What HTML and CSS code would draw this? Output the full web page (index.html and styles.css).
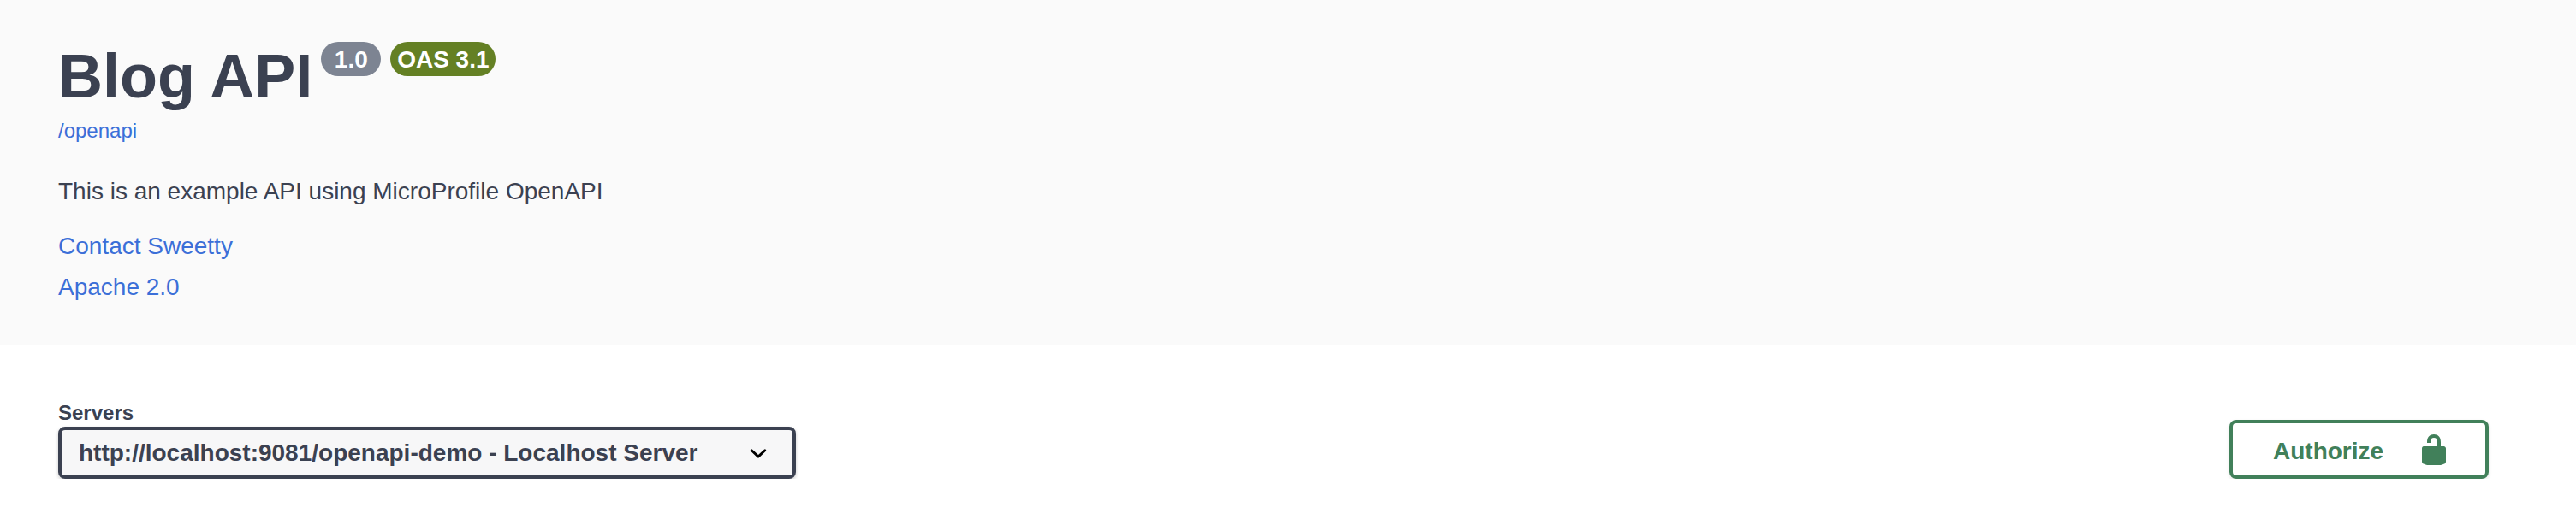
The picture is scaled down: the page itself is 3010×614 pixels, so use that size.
FILE: index.html
```html
<!DOCTYPE html>
<html lang="en">
<head>
  <meta charset="UTF-8">
  <title>Blog API</title>
  <link rel="stylesheet" href="styles.css">
</head>
<body>
  <section class="info">
    <div class="title-row">
      <h1>Blog API</h1>
      <span class="badge badge-version">1.0</span>
      <span class="badge badge-oas">OAS 3.1</span>
    </div>
    <a class="spec-link" href="#">/openapi</a>
    <p class="description">This is an example API using MicroProfile OpenAPI</p>
    <div class="info-link"><a href="#">Contact Sweetty</a></div>
    <div class="info-link"><a href="#">Apache 2.0</a></div>
  </section>

  <section class="scheme">
    <div class="servers">
      <label for="servers">Servers</label>
      <select id="servers">
        <option>http://localhost:9081/openapi-demo - Localhost Server</option>
      </select>
    </div>
    <button class="authorize">
      <span>Authorize</span>
      <svg width="40" height="40" viewBox="0 0 20 20" aria-hidden="true">
        <path d="M15.8 8H14V5.6C14 2.703 12.665 1 10 1 7.334 1 6 2.703 6 5.6V6h2v-.801C8 3.754 8.797 3 10 3c1.203 0 2 .754 2 2.199V8H4c-.553 0-1 .646-1 1.199V17c0 .549.428 1.139.951 1.307l1.197.387C5.672 18.861 6.55 19 7.1 19h5.8c.549 0 1.428-.139 1.951-.307l1.196-.387c.524-.167.953-.757.953-1.306V9.199C17 8.646 16.352 8 15.8 8z"/>
      </svg>
    </button>
  </section>
</body>
</html>
```

FILE: styles.css
```css
body {
  margin: 0;
  background-color: #fff;
  color: #3b4151;
  font-family: "Liberation Sans", Arial, sans-serif;
}

a {
  color: #3b6fd8;
  text-decoration: none;
}

.info {
  height: 403px;
  box-sizing: border-box;
  padding: 48px 102px 0 68px;
  background-color: #fafafa;
}

.title-row {
  display: flex;
  align-items: flex-start;
  height: 87px;
}

h1 {
  margin: 0 10px 0 0;
  font-size: 72px;
  line-height: 82px;
  font-weight: bold;
}

.badge {
  box-sizing: border-box;
  height: 40px;
  margin-top: 1px;
  margin-right: 11px;
  border-radius: 20px;
  color: #fff;
  font-size: 28px;
  font-weight: bold;
  line-height: 41px;
  text-align: center;
  white-space: nowrap;
}

.badge-version {
  width: 70px;
  background-color: #7d8492;
}

.badge-oas {
  width: 123px;
  background-color: #648024;
}

.spec-link {
  display: block;
  font-size: 24px;
  line-height: 36px;
}

.description {
  margin: 33px 0 20px;
  font-size: 28px;
  line-height: 40px;
}

.info-link {
  font-size: 28px;
  line-height: 48px;
}

.scheme {
  display: flex;
  justify-content: space-between;
  align-items: flex-end;
  padding: 65px 102px 0 68px;
}

.servers label {
  display: block;
  font-size: 24px;
  font-weight: bold;
  line-height: 30px;
  margin-bottom: 1px;
}

select {
  display: block;
  width: 862px;
  height: 61px;
  padding: 0 80px 0 20px;
  border: 4px solid #3b4151;
  border-radius: 8px;
  box-shadow: 0 2px 4px rgba(0, 0, 0, 0.2);
  appearance: none;
  background: #f7f7f8 url("data:image/svg+xml,%3Csvg xmlns='http://www.w3.org/2000/svg' viewBox='0 0 20 20'%3E%3Cpath d='M13.418 7.859a.695.695 0 0 1 .978 0 .68.68 0 0 1 0 .969l-3.908 3.83a.697.697 0 0 1-.979 0l-3.908-3.83a.68.68 0 0 1 0-.969.695.695 0 0 1 .978 0L10 11l3.418-3.141z'/%3E%3C/svg%3E") no-repeat right 20px center / 40px;
  color: #3b4151;
  font-family: inherit;
  font-size: 28px;
  font-weight: bold;
}

.authorize {
  display: flex;
  align-items: center;
  box-sizing: border-box;
  width: 303px;
  height: 69px;
  padding: 0 0 0 47px;
  border: 4px solid #41805a;
  border-radius: 8px;
  box-shadow: 0 2px 4px rgba(0, 0, 0, 0.1);
  background-color: transparent;
  color: #41805a;
  font-family: inherit;
  font-size: 28px;
  font-weight: bold;
}

.authorize span {
  margin-top: 5px;
}

.authorize svg {
  margin-left: 39px;
  fill: #41805a;
}
```
